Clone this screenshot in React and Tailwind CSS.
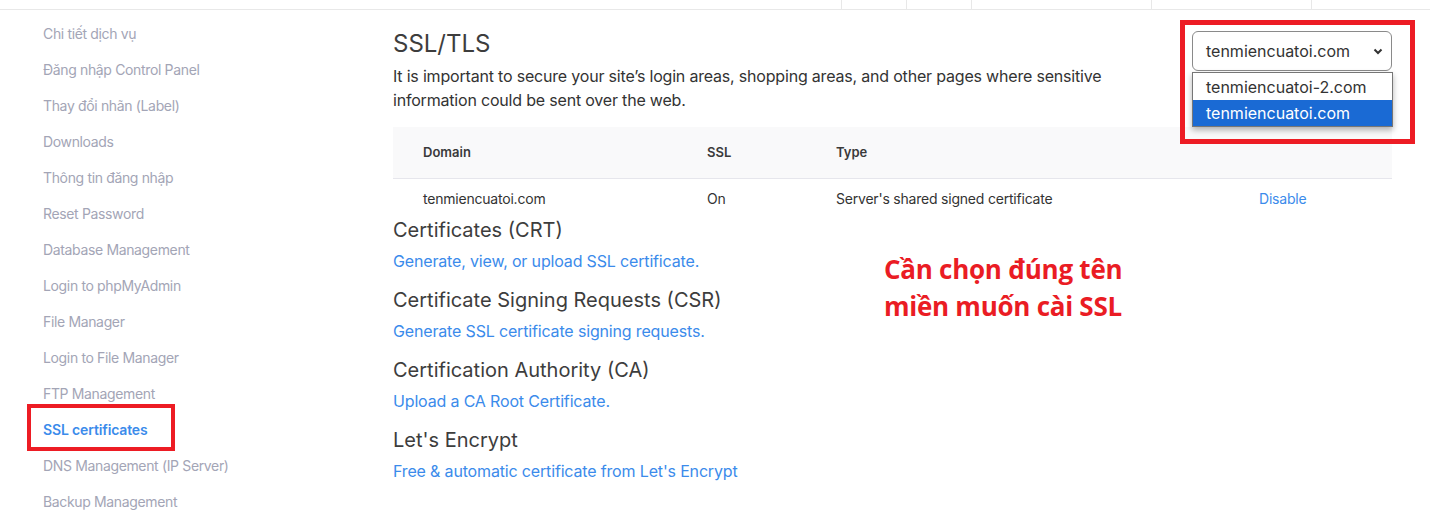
import React from "react";

const sideItems = [
  "Chi tiết dịch vụ",
  "Đăng nhập Control Panel",
  "Thay đổi nhãn (Label)",
  "Downloads",
  "Thông tin đăng nhập",
  "Reset Password",
  "Database Management",
  "Login to phpMyAdmin",
  "File Manager",
  "Login to File Manager",
  "FTP Management",
  "SSL certificates",
  "DNS Management (IP Server)",
  "Backup Management",
];

const sections = [
  ["Certificates (CRT)", "Generate, view, or upload SSL certificate."],
  ["Certificate Signing Requests (CSR)", "Generate SSL certificate signing requests."],
  ["Certification Authority (CA)", "Upload a CA Root Certificate."],
  ["Let's Encrypt", "Free & automatic certificate from Let's Encrypt"],
];

export default function App() {
  return (
    <div className="w-[1430px] h-[528px] overflow-hidden bg-white text-[#333]" style={{ fontFamily: "Inter, 'Noto Sans', sans-serif" }}>
      {/* top bar */}
      <div className="h-[10px] border-b border-[#e8e8e8] flex">
        <div className="w-[841px]" />
        <div className="w-[65px] border-l border-[#e8e8e8]" />
        <div className="w-[65px] border-l border-[#e8e8e8]" />
        <div className="w-[180px] border-l border-[#e8e8e8]" />
        <div className="w-[160px] border-l border-[#e8e8e8]" />
        <div className="flex-1 border-l border-[#e8e8e8]" />
      </div>
      <div className="flex">
        {/* sidebar */}
        <div className="w-[393px] pl-[43px] pt-[5px]">
          {sideItems.map((t) => {
            const active = t === "SSL certificates";
            return (
              <div key={t} className="relative h-9 flex items-center">
                <span className={active ? "text-[14px] font-semibold tracking-[-0.01em] text-[#3b8beb]" : "text-[14px] tracking-[-0.025em] text-[#a3a5b6]"}>{t}</span>
                {active && (
                  <div className="absolute left-[-16px] top-[-7px] w-[148px] h-[47px] border-4 border-[#ed1c24]" />
                )}
              </div>
            );
          })}
        </div>
        {/* main */}
        <div className="relative w-[999px] pt-[20px]">
          <div className="flex justify-between">
            <div>
              <h1 className="text-[24px] leading-[28px] text-[#3d3d3d]">SSL/TLS</h1>
              <p className="mt-[6px] text-[16px] leading-[24px] tracking-[-0.012em] text-[#333] w-[760px]">
                It is important to secure your site’s login areas, shopping areas, and other pages where sensitive information could be sent over the web.
              </p>
            </div>
            <div className="relative mt-[1px] h-[40px]">
              <div className="w-[200px] h-[40px] border border-[#8a8a8a] rounded-[6px] flex items-center justify-between pl-[13px] pr-[8px] text-[16px] text-[#333]">
                <span>tenmiencuatoi.com</span>
                <svg width="10" height="10" viewBox="0 0 10 10" fill="none" stroke="#333" strokeWidth="2">
                  <path d="M1.5 3.5 L5 7 L8.5 3.5" />
                </svg>
              </div>
              <div className="absolute left-0 top-[41px] w-[201px] bg-white border border-[#767676] shadow-[0_3px_6px_rgba(0,0,0,0.3)] text-[16px]">
                <div className="h-[27px] flex items-center pl-[13px] text-[#333]">tenmiencuatoi-2.com</div>
                <div className="h-[26px] flex items-center pl-[13px] bg-[#1a6ad4] text-white">tenmiencuatoi.com</div>
              </div>
              <div className="absolute left-[-12px] top-[-11px] w-[235px] h-[124px] border-[5px] border-[#ed1c24]" />
            </div>
          </div>
          {/* table */}
          <div className="mt-[15px]">
            <div className="h-[52px] bg-[#f9f9fa] border-b border-[#e6e6ec] flex items-center text-[13px] font-semibold text-[#3a3a3a]">
              <div className="w-[314px] pl-[30px]">Domain</div>
              <div className="w-[129px]">SSL</div>
              <div>Type</div>
            </div>
            <div className="h-[39px] flex items-center text-[14px] tracking-[-0.015em] text-[#333]">
              <div className="w-[314px] pl-[30px]">tenmiencuatoi.com</div>
              <div className="w-[129px]">On</div>
              <div className="w-[423px]">Server's shared signed certificate</div>
              <div className="text-[#3b8beb]">Disable</div>
            </div>
          </div>
          {/* sections */}
          <div className="flex flex-col">
            {sections.map(([h, l]) => (
              <div key={h} className="pb-[15px]">
                <h2 className="text-[20px] leading-[24px] text-[#3d3d3d]">{h}</h2>
                <a className="block mt-[7px] text-[16px] leading-[24px] tracking-[-0.01em] text-[#3b8beb]">{l}</a>
              </div>
            ))}
          </div>
          <div className="absolute left-[491px] top-[241px] text-[26px] leading-[37px] font-bold tracking-[-0.01em] text-[#ea1c24]" style={{ fontFamily: "'Open Sans', sans-serif" }}>
            <div>Cần chọn đúng tên</div>
            <div>miền muốn cài SSL</div>
          </div>
        </div>
      </div>
    </div>
  );
}
